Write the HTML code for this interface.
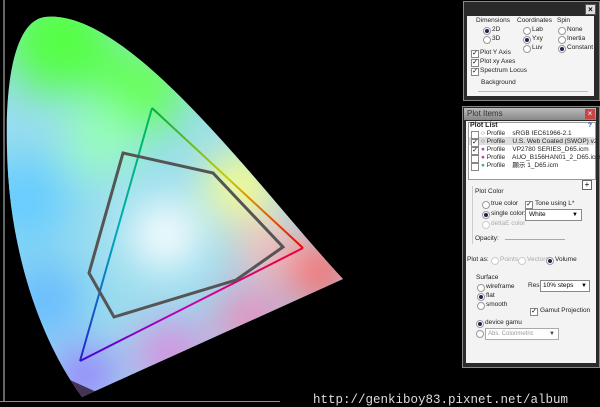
<!DOCTYPE html>
<html><head><meta charset="utf-8"><style>
body{margin:0;width:600px;height:407px;background:#000;overflow:hidden;position:relative;font-family:"Liberation Sans",sans-serif;}
.a{position:absolute;font-size:6.5px;color:#222;white-space:nowrap;line-height:8px}
.rb{position:absolute;width:6px;height:6px;border-radius:50%;border:1px solid #999;background:#fff}
.rb.on::after{content:"";position:absolute;left:1px;top:1px;width:4px;height:4px;border-radius:50%;background:#225}
.cb{position:absolute;width:6px;height:6px;border:1px solid #888;background:#fff;font-size:7px;line-height:6px;text-align:center;color:#000}
</style></head><body>
<svg width="600" height="407" style="position:absolute;left:0;top:0">
<defs>
<clipPath id="hs"><path d="M343 279 C260 190 130 8 45 17 C15 21 5 80 7 150 C9 250 40 340 82 397 Z"/></clipPath>
<filter id="bl"><feGaussianBlur stdDeviation="22"/></filter>
<linearGradient id="ge1" x1="0" y1="0" x2="1" y2="1"><stop offset="0" stop-color="#0a4"/><stop offset=".5" stop-color="#cc0"/><stop offset="1" stop-color="#e00"/></linearGradient>
<linearGradient id="ge2" x1="1" y1="0" x2="0" y2="1"><stop offset="0" stop-color="#e03"/><stop offset=".5" stop-color="#c0a"/><stop offset="1" stop-color="#40d"/></linearGradient>
<linearGradient id="ge3" x1="0" y1="1" x2="0" y2="0"><stop offset="0" stop-color="#22c"/><stop offset=".5" stop-color="#0ab"/><stop offset="1" stop-color="#0b5"/></linearGradient>
</defs>
<line x1="4" y1="0" x2="4" y2="401" stroke="#ccc" stroke-width="1"/>
<line x1="0" y1="401.5" x2="280" y2="401.5" stroke="#888" stroke-width="1"/>
<g clip-path="url(#hs)">
<rect x="0" y="0" width="350" height="400" fill="#9de"/>
<g filter="url(#bl)">
<circle cx="60" cy="40" r="55" fill="#5f4"/>
<circle cx="140" cy="90" r="45" fill="#6f5"/>
<circle cx="100" cy="140" r="35" fill="#9fb"/>
<circle cx="25" cy="200" r="45" fill="#6cf"/>
<circle cx="45" cy="300" r="40" fill="#6bf"/>
<circle cx="85" cy="375" r="28" fill="#96f"/>
<circle cx="170" cy="355" r="35" fill="#d8d"/>
<circle cx="250" cy="320" r="35" fill="#e8b"/>
<circle cx="320" cy="272" r="35" fill="#f66"/>
<circle cx="240" cy="185" r="35" fill="#ff8"/>
<circle cx="265" cy="245" r="30" fill="#fbb"/>
<circle cx="165" cy="235" r="35" fill="#fff"/>
</g>
<path d="M70 380 L110 398 L60 410Z" fill="#435"/>
</g>
<line x1="152" y1="108" x2="303" y2="248" stroke="url(#ge1)" stroke-width="2"/>
<line x1="303" y1="248" x2="80" y2="361" stroke="url(#ge2)" stroke-width="2"/>
<line x1="80" y1="361" x2="152" y2="108" stroke="url(#ge3)" stroke-width="2"/>
<polygon points="123,153 213,173 283,247 236,280 114,317 89,273" fill="none" stroke="#555" stroke-width="3"/>
<text x="313" y="403" font-family="Liberation Mono" font-size="12.5" fill="#ddd">http://genkiboy83.pixnet.net/album</text>
</svg>

<!-- top panel -->
<div style="position:absolute;left:463px;top:1px;width:135px;height:98px;background:#2a2a2a;border:1px solid #888"></div>
<div style="position:absolute;left:585px;top:4px;width:9px;height:9px;background:#ddd;border:1px solid #555;font-size:8px;line-height:9px;text-align:center;font-weight:bold">×</div>
<div style="position:absolute;left:467px;top:16px;width:127px;height:80px;background:#f4f4f4"></div>
<div class="a" style="left:476px;top:17px">Dimensions</div>
<div class="rb on" style="left:483px;top:27px"></div><div class="a" style="left:492px;top:26px">2D</div>
<div class="rb" style="left:483px;top:36px"></div><div class="a" style="left:492px;top:35px">3D</div>
<div class="a" style="left:517px;top:17px">Coordinates</div>
<div class="rb" style="left:523px;top:27px"></div><div class="a" style="left:532px;top:26px">Lab</div>
<div class="rb on" style="left:523px;top:36px"></div><div class="a" style="left:532px;top:35px">Yxy</div>
<div class="rb" style="left:523px;top:45px"></div><div class="a" style="left:532px;top:44px">Luv</div>
<div class="a" style="left:557px;top:17px">Spin</div>
<div class="rb" style="left:558px;top:27px"></div><div class="a" style="left:567px;top:26px">None</div>
<div class="rb" style="left:558px;top:36px"></div><div class="a" style="left:567px;top:35px">Inertia</div>
<div class="rb on" style="left:558px;top:45px"></div><div class="a" style="left:567px;top:44px">Constant</div>
<div class="cb" style="left:471px;top:50px">✓</div><div class="a" style="left:480px;top:49px">Plot Y Axis</div>
<div class="cb" style="left:471px;top:59px">✓</div><div class="a" style="left:480px;top:58px">Plot xy Axes</div>
<div class="cb" style="left:471px;top:68px">✓</div><div class="a" style="left:480px;top:67px">Spectrum Locus</div>
<div class="a" style="left:481px;top:79px">Background</div>
<div style="position:absolute;left:478px;top:91px;width:110px;height:1px;background:#bbb"></div>

<!-- second panel -->
<div style="position:absolute;left:462px;top:106px;width:136px;height:260px;background:#2a2a2a;border:1px solid #888"></div>
<div style="position:absolute;left:464px;top:108px;width:132px;height:12px;background:linear-gradient(#bbb,#888)"></div>
<div class="a" style="left:467px;top:109px;font-size:8px;color:#333;line-height:10px">Plot Items</div>
<div style="position:absolute;left:585px;top:109px;width:10px;height:10px;background:#c44;color:#fff;font-size:8px;line-height:10px;text-align:center">×</div>
<div style="position:absolute;left:466px;top:121px;width:130px;height:242px;background:#f3f3f3"></div>
<div style="position:absolute;left:468px;top:122px;width:126px;height:56px;background:#fff;border:1px solid #999"></div>
<div class="a" style="left:470px;top:122px;font-weight:bold;font-size:7px">Plot List</div>
<div class="a" style="left:588px;top:122px;color:#23a;font-weight:bold">?</div>
<div style="position:absolute;left:469px;top:137px;width:125px;height:8px;background:#ddd"></div>
<div class="cb" style="left:471px;top:131px"></div><div class="a" style="left:481px;top:130px">○ Profile &nbsp;&nbsp; sRGB IEC61966-2.1</div>
<div class="cb" style="left:471px;top:139px">✓</div><div class="a" style="left:481px;top:138px">○ Profile &nbsp;&nbsp; U.S. Web Coated (SWOP) v2</div>
<div class="cb" style="left:471px;top:147px">✓</div><div class="a" style="left:481px;top:146px"><span style="color:#a4a">●</span> Profile &nbsp;&nbsp; VP2780 SERIES_D65.icm</div>
<div class="cb" style="left:471px;top:155px"></div><div class="a" style="left:481px;top:154px"><span style="color:#a4a">●</span> Profile &nbsp;&nbsp; AUO_B156HAN01_2_D65.icm</div>
<div class="cb" style="left:471px;top:163px"></div><div class="a" style="left:481px;top:162px"><span style="color:#4a8">●</span> Profile &nbsp;&nbsp; 顯示 1_D65.icm</div>
<div style="position:absolute;left:582px;top:180px;width:8px;height:8px;border:1px solid #666;background:#fff;font-size:8px;line-height:8px;text-align:center">+</div>
<div style="position:absolute;left:472px;top:186px;width:1px;height:58px;background:#ccc"></div>
<div class="a" style="left:475px;top:188px">Plot Color</div>
<div class="rb" style="left:482px;top:201px"></div><div class="a" style="left:491px;top:200px">true color</div>
<div class="cb" style="left:525px;top:201px">✓</div><div class="a" style="left:535px;top:200px">Tone using L*</div>
<div class="rb on" style="left:482px;top:211px"></div><div class="a" style="left:491px;top:210px">single color:</div>
<div style="position:absolute;left:525px;top:209px;width:52px;height:10px;background:#fff;border:1px solid #888;font-size:6.5px;line-height:10px;padding-left:3px">White<span style="position:absolute;right:3px;font-size:6px">▼</span></div>
<div class="rb" style="left:482px;top:221px;border-color:#ccc"></div><div class="a" style="left:491px;top:220px;color:#aaa">deltaE color</div>
<div class="a" style="left:475px;top:235px">Opacity:</div>
<div style="position:absolute;left:505px;top:239px;width:60px;height:1px;background:#aaa"></div>
<div class="a" style="left:467px;top:256px">Plot as:</div>
<div class="rb" style="left:491px;top:257px;border-color:#ccc"></div><div class="a" style="left:500px;top:256px;color:#aaa">Points</div>
<div class="rb" style="left:518px;top:257px;border-color:#ccc"></div><div class="a" style="left:527px;top:256px;color:#aaa">Vectors</div>
<div class="rb on" style="left:546px;top:257px"></div><div class="a" style="left:555px;top:256px">Volume</div>
<div class="a" style="left:476px;top:274px">Surface</div>
<div class="rb" style="left:477px;top:284px"></div><div class="a" style="left:486px;top:283px">wireframe</div>
<div class="rb on" style="left:477px;top:293px"></div><div class="a" style="left:486px;top:292px">flat</div>
<div class="rb" style="left:477px;top:302px"></div><div class="a" style="left:486px;top:301px">smooth</div>
<div class="a" style="left:528px;top:282px">Res:</div>
<div style="position:absolute;left:540px;top:280px;width:46px;height:10px;background:#fff;border:1px solid #888;font-size:6.5px;line-height:10px;padding-left:2px">10% steps<span style="position:absolute;right:2px;font-size:6px">▼</span></div>
<div class="cb" style="left:530px;top:308px">✓</div><div class="a" style="left:540px;top:307px">Gamut Projection</div>
<div class="rb on" style="left:476px;top:320px"></div><div class="a" style="left:485px;top:319px">device gamu</div>
<div class="rb" style="left:476px;top:330px"></div>
<div style="position:absolute;left:485px;top:328px;width:70px;height:10px;background:#fff;border:1px solid #aaa;font-size:6px;line-height:10px;padding-left:2px;color:#999">Abs. Colorimetric<span style="position:absolute;right:3px;color:#444">▼</span></div>
</body></html>
